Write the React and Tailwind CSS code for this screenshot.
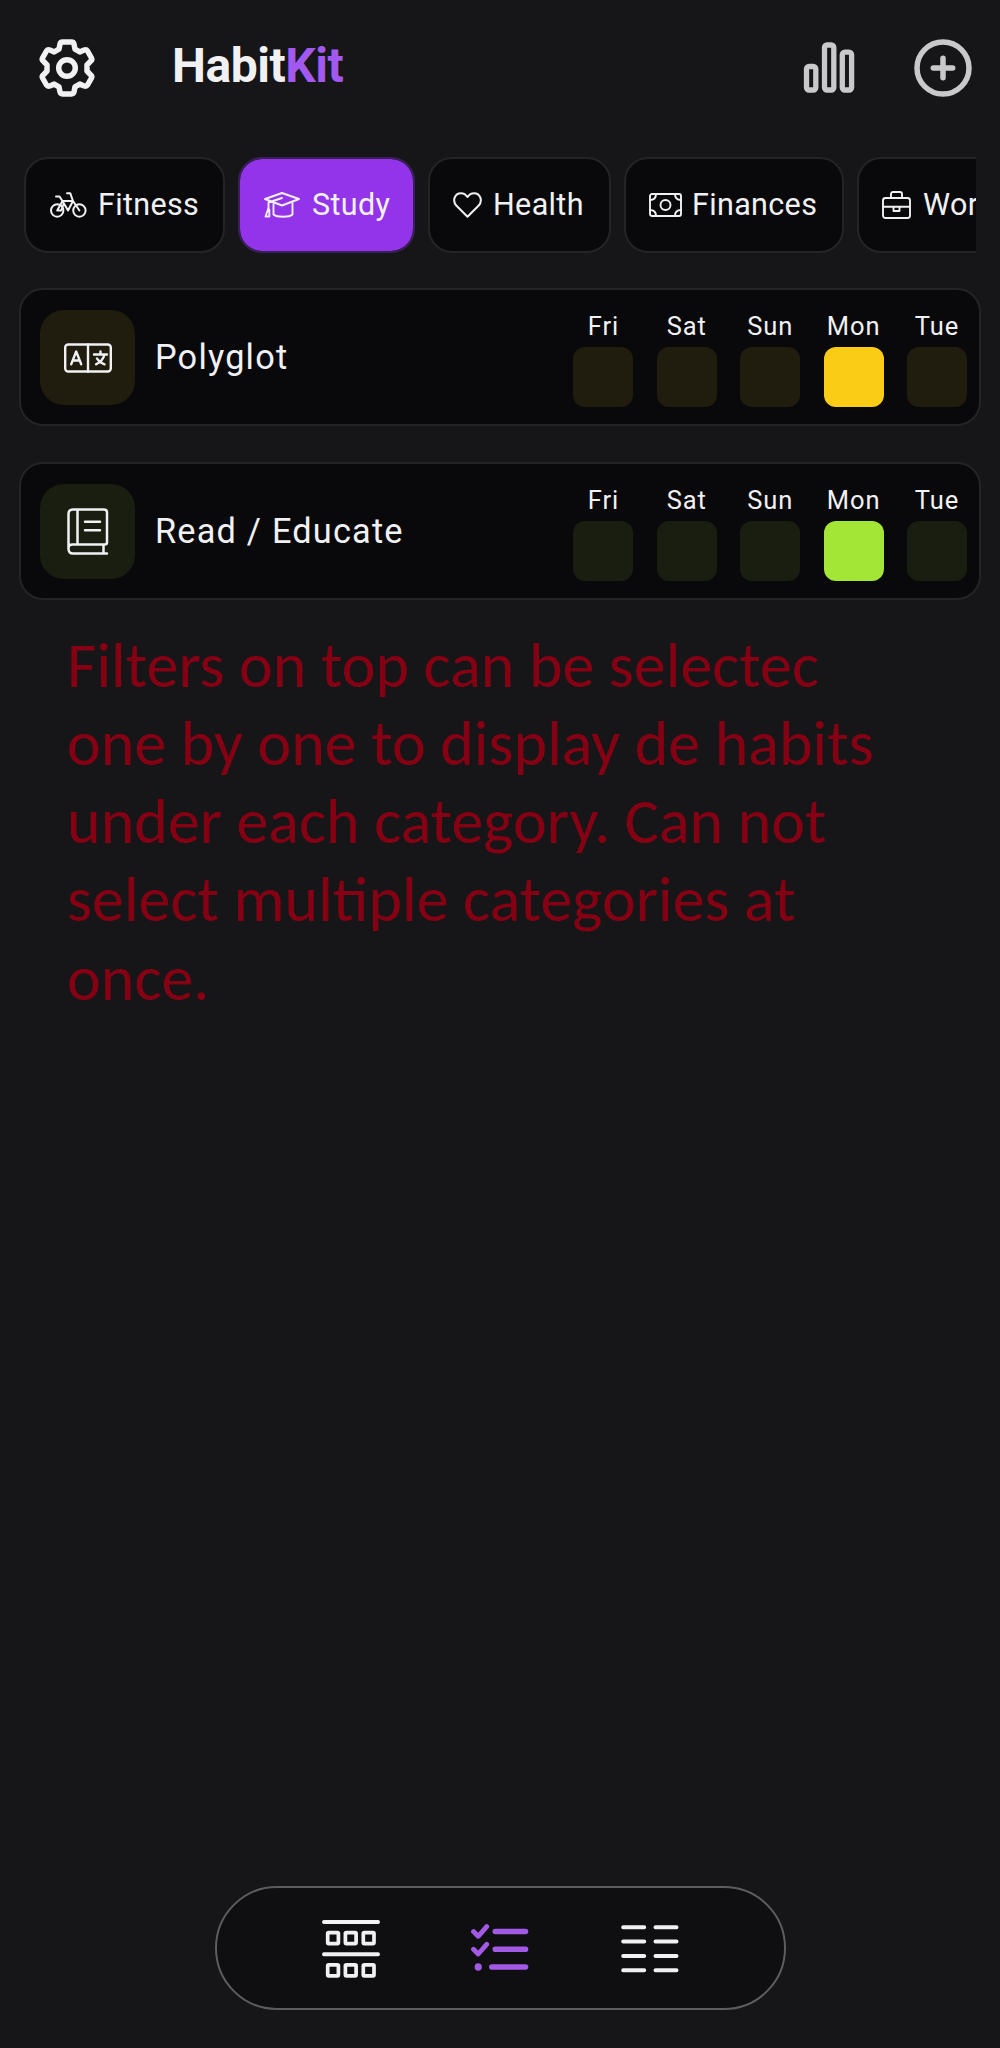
import React from "react";

const s = { fill: "none", stroke: "currentColor", strokeLinecap: "round", strokeLinejoin: "round" };

const Gear = () => (
  <svg className="block" width="60" height="60" viewBox="0 0 60 60" {...s} strokeWidth="5.500">
    <path d="M25.5 4h9c1.500 0 2.200 0.700 2.500 2l1 5.200 4.800 2.700 4.300-1.900c1.500-0.500 2.600-0.200 3.400 1l4 7c0.600 1.100 0.400 2-0.600 2.900L50 27v6l3.900 4.100c1 0.900 1.200 1.800 0.600 2.900l-4 7c-0.800 1.200-1.900 1.500-3.400 1l-4.300-1.900L38 48.900l-1 5.100c-0.300 1.300-1 2-2.500 2h-9c-1.500 0-2.200-0.700-2.500-2l-1-5.100-4.800-2.800-4.300 1.900c-1.500 0.500-2.600 0.200-3.400-1l-4-7c-0.600-1.100-0.400-2 0.600-2.900L10 33v-6l-3.900-4.100c-1-0.900-1.200-1.800-0.600-2.900l4-7c0.800-1.200 1.900-1.500 3.400-1l4.300 1.900L22 11.200l1-5.200c0.300-1.300 1-2 2.500-2z" />
    <circle cx="30" cy="30" r="8.300" />
  </svg>
);
const Bars = () => (
  <svg className="block" width="52" height="52" viewBox="0 0 52 52" {...s} strokeWidth="5.300">
    <rect x="3.500" y="24.500" width="9.300" height="23.500" rx="2.500" />
    <rect x="21.500" y="3" width="9.300" height="45" rx="2.500" />
    <rect x="39.300" y="10.200" width="9.300" height="37.800" rx="2.500" />
  </svg>
);
const Plus = () => (
  <svg className="block" width="58" height="58" viewBox="0 0 58 58" {...s} strokeWidth="5.500">
    <circle cx="29" cy="29" r="26" />
    <path d="M29 19.300v19.400M19.300 29h19.400" />
  </svg>
);
const Bike = () => (
  <svg className="block" width="37" height="26" viewBox="0 0 37 26" {...s} strokeWidth="2">
    <circle cx="7.200" cy="18.500" r="6.200" />
    <circle cx="29.400" cy="18.500" r="6.200" />
    <path d="M6 4.500h3.500l3 4.500h10.500l-5 9.500-5.500-9.500M17 1.200h3.200L23 9l6.400 9.500M7.200 18.500L12.500 9M7.200 18.500h4l2.600-7" />
  </svg>
);
const Cap = () => (
  <svg className="block" width="36" height="26" viewBox="0 0 36 26" {...s} strokeWidth="1.900">
    <path d="M1 7L18 1l17 6-17 6.500zM18 6L4.500 10.500V17" />
    <path d="M9.500 12v10.500c3 3 16 3 19 0V11M4.200 17L1.500 24.500h3.800V17.500z" />
  </svg>
);
const Heart = () => (
  <svg className="block" width="29" height="26" viewBox="0 0 29 26" {...s} strokeWidth="2">
    <path d="M14.500 24.800L3.500 13.700C-1 9 1.500 1.200 8 1.200c3 0 5 1.500 6.500 3.800C16 2.700 18 1.200 21 1.200c6.500 0 9 7.800 4.500 12.500z" />
  </svg>
);
const Money = () => (
  <svg className="block" width="33" height="24" viewBox="0 0 33 24" {...s} strokeWidth="1.900">
    <rect x="1" y="1" width="31" height="22" rx="2" />
    <circle cx="16.500" cy="12" r="5" />
    <path d="M1 7c4 0 6-2 6-6M32 7c-4 0-6-2-6-6M1 17c4 0 6 2 6 6M32 17c-4 0-6 2-6 6" />
  </svg>
);
const Case = () => (
  <svg className="block" width="29" height="28" viewBox="0 0 29 28" {...s} strokeWidth="1.900">
    <rect x="1" y="7" width="27" height="20" rx="2.500" />
    <path d="M9 7V3c0-1.200 0.700-2 2-2h7c1.300 0 2 0.800 2 2v4M1 15.800h10.500M17.500 15.800H28M11.500 15.800h6v4.200h-6z" />
  </svg>
);
const Translate = () => (
  <svg className="block" width="48" height="30" viewBox="0 0 48 30" {...s} strokeWidth="2.400">
    <rect x="1.200" y="1.500" width="45.600" height="27" rx="3" />
    <path d="M24 1.500v27M7.200 21.300l5-12.800 5 12.800M9 17.500h6.400M30 11.500h13M36.500 8.500v3M40.500 11.500c-1 4-4.500 8-8.500 9.800M33 15.500c1.500 2.500 4 4.700 7.500 5.800" />
  </svg>
);
const Book = () => (
  <svg className="block" width="42" height="47" viewBox="0 0 42 47" {...s} strokeWidth="2.500">
    <path d="M40 45.500H6c-3 0-4.500-1.800-4.500-4.800V6C1.500 3 3 1.500 6 1.500h31c2 0 3 1 3 3V34.500c0 1.500-1 2-2.500 2H5.500c-2.500 0-4 1.500-4 3.700M10.500 1.500V36.500M36.500 36.500v9M18 13.700h15M18 22.200h15" />
  </svg>
);
const Grid = () => (
  <svg className="mt-[2px] block" width="58" height="58" viewBox="0 0 58 58" {...s} strokeWidth="4">
    <path d="M2 2h54M2 34.200h54" />
    {[12.6, 44.8].map((y) =>
      [5.7, 23.4, 41.3].map((x) => <rect key={x + "-" + y} x={x} y={y} width="10.700" height="11" rx="1" strokeWidth="3.700" />)
    )}
  </svg>
);
const Checks = () => (
  <svg className="mb-[2px] block" width="58" height="47" viewBox="0 0 58 47" {...s} strokeWidth="5.600">
    <path d="M24.300 7.500h30.200M24.300 25.200h30.200M20.800 43h33.700" />
    <path d="M2.500 7.500l4.700 4.800 8.500-9.700M2.500 25.200l4.700 4.800 8.500-9.700" strokeWidth="4.800" />
    <ellipse cx="7.200" cy="43" rx="3.600" ry="3.800" fill="currentColor" stroke="none" />
  </svg>
);
const Rows = () => (
  <svg className="mt-[2px] block" width="58" height="48" viewBox="0 0 58 48" {...s} strokeWidth="4">
    <path d="M2.200 2.300h21M34.500 2.300h21M2.200 16.500h21M34.500 16.500h21M2.200 31h21M34.500 31h21M2.200 45.200h21M34.500 45.200h21" />
  </svg>
);

const filters = [
  { label: "Fitness", Icon: Bike, box: "w-[201px] pl-[24px] gap-[11px]" },
  { label: "Study", Icon: Cap, box: "w-[177px] pl-[24px] gap-[12px]", active: true },
  { label: "Health", Icon: Heart, box: "w-[183px] pl-[23px] gap-[11px]" },
  { label: "Finances", Icon: Money, box: "w-[220px] pl-[23px] gap-[10px]" },
  { label: "Wor", Icon: Case, box: "w-[180px] pl-[23px] gap-[12px]" },
];
const habits = [
  { name: "Polyglot", Icon: Translate, dim: "bg-[#201c0e]", on: "bg-[#facc15]" },
  { name: "Read / Educate", Icon: Book, dim: "bg-[#191e10]", on: "bg-[#a3e635]" },
];
const days = ["Fri", "Sat", "Sun", "Mon", "Tue"];
const note = [
  "Filters on top can be selectec",
  "one by one to display de habits",
  "under each category. Can not",
  "select multiple categories at",
  "once.",
];

export default function App() {
  return (
    <div className="flex h-[2048px] w-[1000px] flex-col overflow-hidden bg-[#161618] font-['Roboto',sans-serif] text-[#f1f1f3]">
      <header className="flex h-[157px] items-start pl-[37px] pr-[28px] pt-[38px]">
        <Gear />
        <h1 className="ml-[75px] text-[48px] font-bold leading-[56px] tracking-[-0.450px]">
          Habit<span className="text-[#a259f0]">Kit</span>
        </h1>
        <div className="ml-auto flex text-[#c9c9cb]">
          <div className="mr-[59px] mt-[4px]"><Bars /></div>
          <div className="mt-px"><Plus /></div>
        </div>
      </header>

      <nav className="mr-[24px] flex h-[96px] gap-[13px] overflow-hidden pl-[24px]">
        {filters.map(({ label, Icon, box, active }) => (
          <button
            key={label}
            className={`flex h-[96px] shrink-0 items-center rounded-[24px] border-2 text-[30.500px] tracking-[0.350px] ${box} ${
              active ? "border-[#3a2058] bg-[#9333ea] bg-clip-padding" : "border-[#242427] bg-[#09090b]"
            }`}
          >
            <Icon />
            <span>{label}</span>
          </button>
        ))}
      </nav>

      <main className="mt-[35px] flex flex-col gap-[36px] px-[19px]">
        {habits.map(({ name, Icon, dim, on }) => (
          <section key={name} className="flex h-[138px] rounded-[24px] border-2 border-[#242427] bg-[#09090b] pl-[19px] pr-[12px]">
            <div className={`mt-[20px] flex size-[95px] items-center justify-center rounded-[24px] ${dim}`}>
              <Icon />
            </div>
            <div className="ml-[20px] mt-[2px] self-center text-[34.300px] tracking-[1.200px]">{name}</div>
            <div className="ml-auto flex gap-[23.400px] pt-[18px]">
              {days.map((d) => (
                <div key={d} className="flex w-[60px] flex-col items-center">
                  <span className="h-[39px] text-[25.500px] leading-[36px] tracking-[0.900px]">{d}</span>
                  <span className={`size-[60px] rounded-[12px] ${d === "Mon" ? on : dim}`} />
                </div>
              ))}
            </div>
          </section>
        ))}
      </main>

      <div className="ml-[67px] mt-[26px] font-['Carlito','Lato',sans-serif] text-[64px] leading-[78.125px] text-[#860014]">
        {note.map((line) => (
          <p key={line} className="whitespace-nowrap">{line}</p>
        ))}
      </div>

      <footer className="mx-auto mb-[38px] mt-auto flex h-[124px] w-[571px] items-center justify-between rounded-[62px] border-2 border-[#5d5d60] bg-[#0f0f11] px-[105px]">
        <Grid />
        <span className="text-[#a259e6]"><Checks /></span>
        <Rows />
      </footer>
    </div>
  );
}
